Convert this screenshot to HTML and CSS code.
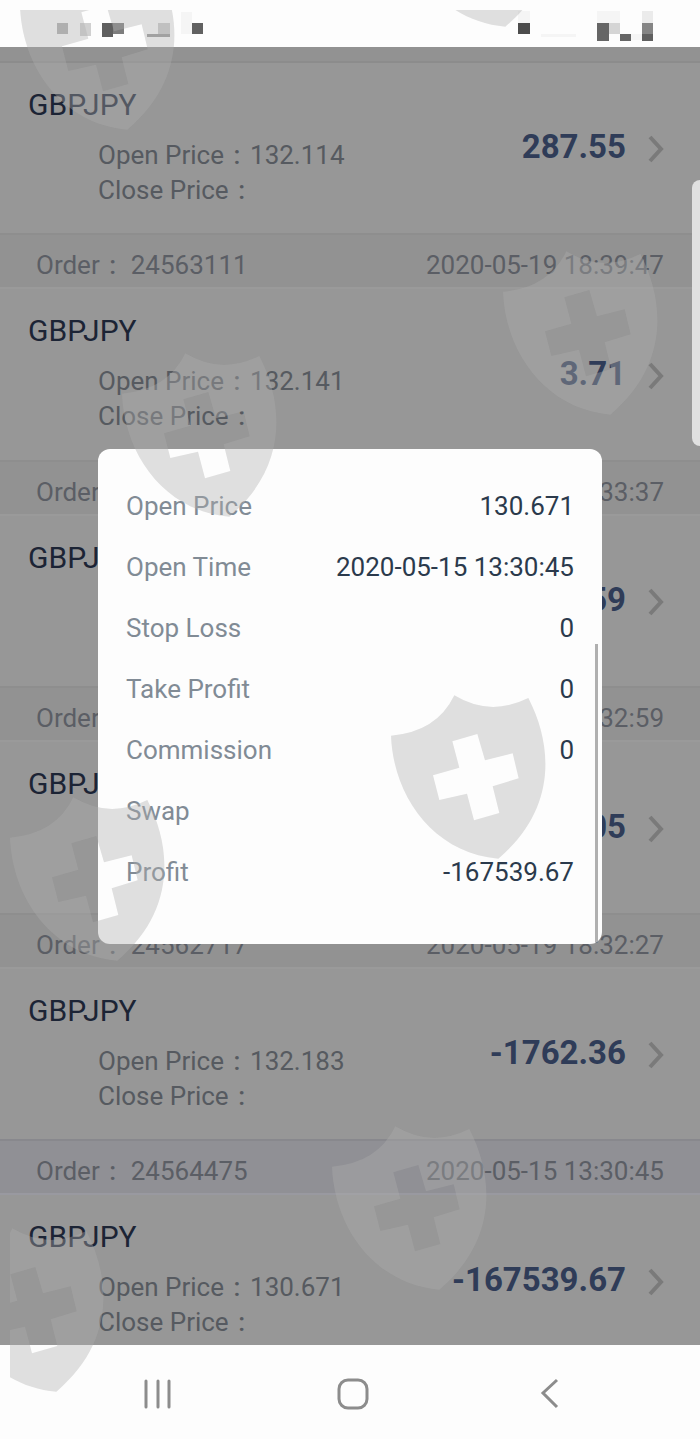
FILE: index.html
```html
<!DOCTYPE html>
<html lang="en">
<head>
<meta charset="utf-8">
<meta name="viewport" content="width=device-width, initial-scale=1">
<title>Trade history</title>
<link rel="stylesheet" href="styles.css">
</head>
<body>
<svg class="defs" width="0" height="0" aria-hidden="true">
  <symbol id="chevron" viewBox="0 0 16 28"><path d="M2 2 L13 14 L2 26" fill="none" stroke="currentColor" stroke-width="4"/></symbol>
  <symbol id="shield" viewBox="0 0 480 501"><path fill-rule="evenodd" d="M3 128 Q140 117 193 7 Q300 72 415 15 C490 160 500 350 325 497 C130 480 10 310 3 128Z M187 145 L262 123 L285 202 L368 181 L386 256 L308 280 L328 360 L252 382 L231 302 L148 321 L129 247 L208 224Z"/></symbol>
</svg>
<div class="screen">
  <header class="status">
    <svg width="155" height="47" aria-hidden="true">
      <path fill="#b0b0b0" d="M1 23h11v11H1z"/><path fill="#d0d0d0" d="M24 23h11v13H24z"/>
      <path fill="#5f5f5f" d="M46 23h11v14H46z"/><path fill="#7d7d7d" d="M57 23h11v11H57z"/>
      <path fill="#999" d="M91 34h23v3H91z"/><path fill="#ccc" d="M102 23h12v11h-12z"/>
      <path fill="#f5f5f5" d="M125 12h11v22h-11z"/><path fill="#616161" d="M136 23h11v11h-11z"/>
    </svg>
    <svg width="140" height="47" aria-hidden="true">
      <path fill="#f5f5f5" d="M-2 11h12v12H-2z M21 34h35v3H21z M77 11h23v12H77z M111 34h12v6h-12z"/>
      <path fill="#4c4c4c" d="M-2 23h12v11H-2z"/><path fill="#666" d="M77 23h12v18H77z M100 34h11v7h-11z"/>
      <path fill="#d5d5d5" d="M89 23h11v11H89z"/><path fill="#ebebeb" d="M122 11h11v12h-11z"/>
      <path fill="#858585" d="M122 23h11v11h-11z"/><path fill="#606060" d="M122 34h11v7h-11z"/>
    </svg>
  </header>
  <main class="content">
    <ul class="records">
      <li>
        <div class="bar bar-cut"></div>
        <div class="trade">
          <div class="info"><h2>GBPJPY</h2><p>Open Price<i>:</i>132.114</p><p>Close Price<i>:</i></p></div>
          <strong>287.55</strong>
          <button aria-label="Details"><svg><use href="#chevron"/></svg></button>
        </div>
      </li>
      <li>
        <div class="bar"><span>Order<i>:</i>24563111</span><time>2020-05-19 18:39:47</time></div>
        <div class="trade">
          <div class="info"><h2>GBPJPY</h2><p>Open Price<i>:</i>132.141</p><p>Close Price<i>:</i></p></div>
          <strong>3.71</strong>
          <button aria-label="Details"><svg><use href="#chevron"/></svg></button>
        </div>
      </li>
      <li>
        <div class="bar"><span>Order</span><time>33:37</time></div>
        <div class="trade">
          <div class="info"><h2>GBPJPY</h2></div>
          <strong>59</strong>
          <button aria-label="Details"><svg><use href="#chevron"/></svg></button>
        </div>
      </li>
      <li>
        <div class="bar"><span>Order</span><time>32:59</time></div>
        <div class="trade">
          <div class="info"><h2>GBPJPY</h2></div>
          <strong>05</strong>
          <button aria-label="Details"><svg><use href="#chevron"/></svg></button>
        </div>
      </li>
      <li>
        <div class="bar"><span>Order<i>:</i>24562717</span><time>2020-05-19 18:32:27</time></div>
        <div class="trade">
          <div class="info"><h2>GBPJPY</h2><p>Open Price<i>:</i>132.183</p><p>Close Price<i>:</i></p></div>
          <strong>-1762.36</strong>
          <button aria-label="Details"><svg><use href="#chevron"/></svg></button>
        </div>
      </li>
      <li>
        <div class="bar bar-active"><span>Order<i>:</i>24564475</span><time>2020-05-15 13:30:45</time></div>
        <div class="trade">
          <div class="info"><h2>GBPJPY</h2><p>Open Price<i>:</i>130.671</p><p>Close Price<i>:</i></p></div>
          <strong>-167539.67</strong>
          <button aria-label="Details"><svg><use href="#chevron"/></svg></button>
        </div>
      </li>
    </ul>
    <div class="edge-handle"></div>
    <div class="overlay">
      <section class="dialog" role="dialog" aria-label="Trade details">
        <dl>
          <div><dt>Open Price</dt><dd>130.671</dd></div>
          <div><dt>Open Time</dt><dd>2020-05-15 13:30:45</dd></div>
          <div><dt>Stop Loss</dt><dd>0</dd></div>
          <div><dt>Take Profit</dt><dd>0</dd></div>
          <div><dt>Commission</dt><dd>0</dd></div>
          <div><dt>Swap</dt><dd></dd></div>
          <div><dt>Profit</dt><dd>-167539.67</dd></div>
        </dl>
        <span class="scroll-thumb"></span>
      </section>
    </div>
  </main>
  <nav class="nav">
    <button aria-label="Recent apps"><svg width="34" height="34" viewBox="0 0 34 34"><path d="M4 4v26M16 4v26M27 4v26" stroke-linecap="round"/></svg></button>
    <button aria-label="Home"><svg width="34" height="34" viewBox="0 0 34 34"><rect x="3" y="3" width="28" height="28" rx="9"/></svg></button>
    <button aria-label="Back"><svg width="34" height="34" viewBox="0 0 34 34"><path d="M27 3 L13 16 L27 30"/></svg></button>
  </nav>
  <svg class="watermarks" aria-hidden="true">
    <use href="#shield" x="9" y="-46" width="160" height="167"/>
    <use href="#shield" x="387" y="-149" width="160" height="167"/>
    <use href="#shield" x="492" y="239" width="160" height="167"/>
    <use href="#shield" x="111" y="341" width="160" height="167"/>
    <use href="#shield" x="380" y="683" width="160" height="167"/>
    <use href="#shield" x="-1" y="785" width="160" height="167"/>
    <use href="#shield" x="321" y="1114" width="160" height="167"/>
    <use href="#shield" x="-62" y="1216" width="160" height="167"/>
  </svg>
</div>
</body>
</html>
```
FILE: styles.css
```css
* {
  box-sizing: border-box;
}

body {
  margin: 0;
  background: #fdfdfd;
  font-family: Roboto, "Noto Sans", sans-serif;
  font-size: 26px;
}

h2, p, ul, dl, dd {
  margin: 0;
  padding: 0;
}

button {
  padding: 0;
  border: 0;
  background: none;
  color: inherit;
}

button svg {
  display: block;
}

i {
  display: inline-block;
  width: 26px;
  font-style: normal;
  font-weight: 500;
  text-align: center;
}

.defs {
  position: absolute;
}

.screen {
  position: relative;
  display: flex;
  flex-direction: column;
  height: 100vh;
  overflow: hidden;
}

.status {
  display: flex;
  justify-content: space-between;
  flex: none;
  height: 47px;
  padding: 0 40px 0 56px;
}

.status svg {
  overflow: visible;
}

.content {
  position: relative;
  flex: 1;
  min-height: 0;
  overflow: hidden;
  background: #979797;
}

.records {
  list-style: none;
}

.bar {
  display: flex;
  justify-content: space-between;
  align-items: center;
  height: 56px;
  padding: 7px 36px 0;
  border-top: 2px solid #8e8e8e;
  border-bottom: 2px solid #9a9a9a;
  background: #929292;
  color: #5b5e65;
  line-height: 36px;
}

.bar i {
  margin-right: 5px;
}

.bar-cut {
  height: 16px;
  padding: 0;
  border-top: 0;
  border-bottom-color: #8c8c8c;
}

.bar-active {
  border-top-color: #88888d;
  border-bottom-color: #9999a0;
  background: #909095;
}

.trade {
  display: flex;
  align-items: center;
  height: 170px;
  padding: 0 36px 0 28px;
}

li:nth-child(even) .trade {
  height: 171px;
}

.info {
  flex: 1;
  align-self: flex-start;
  padding-top: 22px;
}

.info h2 {
  margin-bottom: 13px;
  color: #1c2435;
  font-size: 30px;
  font-weight: 400;
  line-height: 40px;
}

.info p {
  padding-left: 70px;
  color: #565a60;
  line-height: 35px;
}

.trade strong {
  margin-right: 22px;
  padding-bottom: 2px;
  color: #2f3c58;
  font-size: 33px;
  line-height: 40px;
}

.trade button {
  padding-top: 2px;
  color: #7a7a7a;
}

.trade button svg {
  width: 16px;
  height: 28px;
}

.edge-handle {
  position: absolute;
  top: 133px;
  right: 0;
  width: 8px;
  height: 266px;
  border-radius: 8px 0 0 8px;
  background: #e0e0e0;
}

.overlay {
  position: absolute;
  inset: 0;
  display: grid;
  place-items: center;
}

.dialog {
  position: relative;
  width: 72%;
  padding: 27px 28px 41px;
  overflow: hidden;
  border-radius: 12px;
  background: #fdfdfd;
}

.dialog dl div {
  display: flex;
  justify-content: space-between;
  line-height: 61px;
}

.dialog dt {
  color: #818b95;
}

.dialog dd {
  color: #2b3a4c;
}

.scroll-thumb {
  position: absolute;
  right: 4px;
  bottom: 0;
  width: 3px;
  height: 300px;
  background: #b0b0b0;
}

.nav {
  display: flex;
  justify-content: space-around;
  align-items: center;
  flex: none;
  height: 94px;
  padding: 3px 56px 0 62px;
  color: #8c8c8c;
}

.nav svg {
  fill: none;
  stroke: currentColor;
  stroke-width: 3;
}

.watermarks {
  position: absolute;
  top: 10px;
  left: 10px;
  width: calc(100% - 20px);
  height: calc(100% - 20px);
  overflow: hidden;
  fill: #aeaeae;
  fill-opacity: 0.38;
  pointer-events: none;
}
```
